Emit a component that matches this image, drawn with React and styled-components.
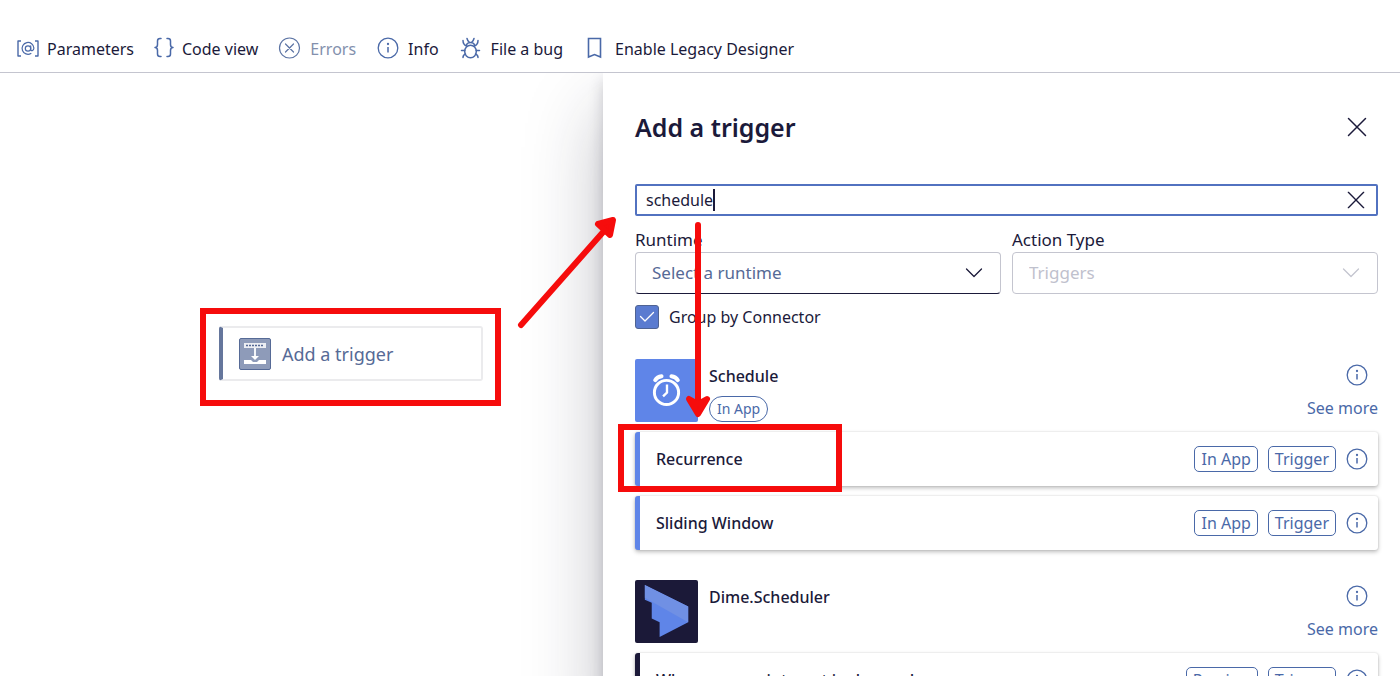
import React, { useState } from "react";
import styled, { createGlobalStyle } from "styled-components";

const ink = "#1b1a3a";
const blue = "#5f85e8";
const steel = "#4a69a8";
const grey = "#c4c5cf";
const red = "#f60c0c";

const GlobalStyle = createGlobalStyle`
  * { box-sizing: border-box; }
  html, body, #root { height: 100%; }
  body {
    margin: 0;
    overflow: hidden;
    background: #fff;
    color: ${ink};
    font: 16px/24px "Segoe UI", "Noto Sans", "Open Sans", sans-serif;
  }
  button, input, select { font: inherit; color: inherit; }
  button { padding: 0; border: 0; background: none; cursor: pointer; }
  svg { display: block; flex: none; }
`;

const Page = styled.div`
  display: flex;
  flex-direction: column;
  height: 100%;
`;

const Toolbar = styled.header`
  display: flex;
  flex: none;
  gap: 20px;
  padding: 37px 15px 11px;
  border-bottom: 1px solid ${grey};
`;

const ToolButton = styled.button`
  display: flex;
  align-items: center;
  gap: 8px;
  white-space: nowrap;
  &:disabled { color: #8390ad; cursor: default; }
`;

const Workspace = styled.main`
  position: relative;
  display: grid;
  flex: 1;
  min-height: 0;
  grid-template-columns: minmax(0, 603fr) minmax(0, 797fr);
  overflow: hidden;
`;

const Canvas = styled.section`
  position: relative;
`;

const TriggerNode = styled.button`
  position: absolute;
  left: 219px;
  top: 253px;
  display: flex;
  align-items: center;
  gap: 11px;
  width: 264px;
  height: 55px;
  padding-left: 16px;
  border: 2px solid #ebebed;
  border-left: 4px solid #65769c;
  border-radius: 3px;
  background: #fff;
  color: #566a96;
  font-size: 18px;
`;

const Highlight = styled.span`
  position: absolute;
  inset: ${(p) => p.$inset};
  width: ${(p) => p.$width || "auto"};
  border: 6px solid ${red};
  pointer-events: none;
`;

const Panel = styled.aside`
  min-width: 0;
  padding: 36px 22px 0 32px;
  background: #fff;
  box-shadow: 0 38px 72px rgba(30, 30, 50, 0.28), 0 8px 14px rgba(30, 30, 50, 0.2);
`;

const PanelHeader = styled.div`
  display: flex;
  align-items: center;
  justify-content: space-between;
  height: 36px;
  padding-right: 11px;
`;

const Title = styled.h1`
  margin: 0;
  font-size: 25px;
  line-height: 36px;
  font-weight: 600;
`;

const SearchBox = styled.div`
  display: flex;
  align-items: center;
  height: 32px;
  margin-top: 39px;
  padding: 0 11px 0 9px;
  border: 2px solid #5272c0;
  border-radius: 2px;
`;

const SearchInput = styled.input`
  field-sizing: content;
  min-width: 8px;
  padding: 0;
  border: 0;
  outline: 0;
  background: none;
  caret-color: transparent;
`;

const Caret = styled.span`
  width: 2px;
  height: 22px;
  background: ${ink};
`;

const ClearButton = styled.button`
  margin-left: auto;
`;

const Filters = styled.div`
  display: grid;
  grid-template-columns: 1fr 1fr;
  gap: 11px;
  margin-top: 12px;
`;

const Field = styled.label`
  display: block;
  font-size: 17px;
`;

const SelectFrame = styled.span`
  display: grid;
  align-items: center;
  > * { grid-area: 1 / 1; }
  > svg { justify-self: end; margin-right: 17px; pointer-events: none; }
`;

const Select = styled.select`
  appearance: none;
  width: 100%;
  height: 42px;
  padding: 0 40px 0 16px;
  border: 1px solid ${grey};
  border-bottom-color: ${ink};
  border-radius: 4px;
  background: #fff;
  color: #566a96;
  &:disabled { border-color: ${grey}; color: #bfc1cd; opacity: 1; }
`;

const CheckLabel = styled.label`
  display: flex;
  align-items: center;
  gap: 10px;
  margin-top: 11px;
`;

const CheckFrame = styled.span`
  display: grid;
  place-items: center;
  > * { grid-area: 1 / 1; }
  > svg { pointer-events: none; }
`;

const Checkbox = styled.input`
  appearance: none;
  width: 24px;
  height: 24px;
  margin: 0;
  border: 1px solid #4f6393;
  border-radius: 3px;
  background: #fff;
  &:checked { background: #5a7bd0; }
  & + svg { visibility: hidden; }
  &:checked + svg { visibility: visible; }
`;

const Group = styled.section`
  display: flex;
  flex-direction: column;
  gap: 10px;
  margin-top: 30px;
`;

const GroupHeader = styled.div`
  display: flex;
  gap: 11px;
  height: 63px;
`;

const Logo = styled.span`
  display: grid;
  place-items: center;
  width: 63px;
  height: 63px;
  border-radius: 2px;
  background: ${(p) => p.$color};
`;

const GroupName = styled.div`
  display: flex;
  flex: 1;
  flex-direction: column;
  align-items: flex-start;
  gap: 8px;
  padding-top: 5px;
`;

const GroupTitle = styled.h2`
  margin: 0;
  font-size: 16px;
  line-height: 24px;
  font-weight: 500;
`;

const Pill = styled.span`
  padding: 0 7px;
  border: 1px solid ${steel};
  border-radius: 14px;
  color: ${steel};
  font-size: 14px;
  line-height: 24px;
`;

const GroupSide = styled.div`
  display: flex;
  flex-direction: column;
  align-items: flex-end;
  gap: 10px;
  padding-top: 5px;
  > button { margin-right: 10px; }
`;

const SeeMore = styled.a`
  color: ${steel};
  text-decoration: none;
`;

const Operation = styled.article`
  position: relative;
  display: flex;
  align-items: center;
  gap: 10px;
  height: 54px;
  padding: 0 10px 0 16px;
  border-left: 5px solid ${(p) => p.$color};
  border-radius: 3px;
  background: #fff;
  box-shadow: 0 0 2px rgba(0, 0, 0, 0.14), 0 2px 4px rgba(0, 0, 0, 0.26);
`;

const OperationName = styled.h3`
  flex: 1;
  margin: 0;
  font-size: 16px;
  line-height: 24px;
  font-weight: 500;
`;

const Tag = styled.span`
  padding: 0 6px;
  border: 1px solid ${steel};
  border-radius: 5px;
  color: ${steel};
  line-height: 24px;
`;

const Arrows = styled.svg`
  position: absolute;
  left: 0;
  top: 0;
  pointer-events: none;
`;

const stroke = { fill: "none", stroke: "currentColor", strokeLinecap: "round", strokeLinejoin: "round" };

const ParametersIcon = () => (
  <svg width="24" height="24" viewBox="-1 0 24 24" {...stroke} stroke={steel} strokeWidth="1.4">
    <path d="M5 4H2v15h3M19 4h3v15h-3" strokeLinecap="butt" />
    <circle cx="12" cy="11.5" r="2.7" strokeWidth="1.2" />
    <path d="M14.7 8.8v3.4c0 2.3 3.2 1.8 3.2-1.1A5.9 5.9 0 1 0 14.9 16.5" strokeWidth="1.2" />
  </svg>
);

const BracesIcon = () => (
  <svg width="20" height="24" viewBox="1 0 20 24" {...stroke} stroke={steel} strokeWidth="1.5">
    <path d="M8 1.500H7Q4.500 1.500 4.500 4v3.500Q4.500 10.500 2 10.500q2.500 0 2.500 3V17Q4.500 19.500 7 19.500h1M14 1.500h1q2.500 0 2.500 2.500v3.500q0 3 2.500 3-2.500 0-2.500 3V17q0 2.500-2.500 2.500h-1" />
  </svg>
);

const ErrorIcon = () => (
  <svg width="24" height="24" viewBox="0 0 24 24" {...stroke} stroke="#5c74a4" strokeWidth="1.2">
    <circle cx="11.5" cy="11" r="10" />
    <path d="m7.500 7 8 8m0-8-8 8" />
  </svg>
);

const InfoIcon = ({ size = 24, viewBox = "-1 0 24 24" }) => (
  <svg width={size} height={size} viewBox={viewBox} {...stroke} stroke={steel} strokeWidth="1.3">
    <circle cx="11" cy="11" r="9.8" />
    <path d="M11 10v5.500" strokeWidth="1.5" strokeLinecap="butt" />
    <circle cx="11" cy="7" r="0.5" />
  </svg>
);

const BugIcon = () => (
  <svg width="24" height="24" viewBox="0 0 24 24" {...stroke} stroke={steel} strokeWidth="1.5">
    <ellipse cx="11.5" cy="14.500" rx="5.8" ry="6.300" />
    <path d="M7.500 8.500C8 4.500 15 4.500 15.500 8.500M8 1.500q.5 2 2 3.500M15 1.500q-.5 2-2 3.500M4 3.500q0 4 3.500 5.500M19 3.500q0 4-3.500 5.500M2.500 13.500h3.200M17.300 13.500h3.200M4 20.500q0-2.500 2.500-3.500M19 20.500q0-2.500-2.500-3.500" />
  </svg>
);

const BookmarkIcon = () => (
  <svg width="24" height="24" viewBox="0 0 24 24" {...stroke} stroke={steel} strokeWidth="1.6">
    <path d="M5.500 1.500h12v18.500l-6-2.500-6 2.500z" strokeLinejoin="miter" />
  </svg>
);

const CloseIcon = ({ size }) => (
  <svg width={size} height={size} viewBox="0 0 20 20" {...stroke} stroke={ink} strokeWidth="1.5">
    <path d="m1.500 1.500 17 17m0-17-17 17" />
  </svg>
);

const ChevronIcon = ({ color }) => (
  <svg width="20" height="20" viewBox="0 0 20 20" {...stroke} stroke={color} strokeWidth="1.3">
    <path d="m2.500 6 7.500 7.500L17.500 6" />
  </svg>
);

const CheckIcon = () => (
  <svg width="24" height="24" viewBox="0 0 24 24" {...stroke} stroke="#fff" strokeWidth="1.3">
    <path d="m5.500 11.500 4.500 4.500 8.500-8.500" />
  </svg>
);

const TriggerIcon = () => (
  <svg width="32" height="32" viewBox="0 0 32 32">
    <rect x="0.5" y="0.5" width="31" height="31" rx="1.5" fill="#8e9bb9" stroke="#566a96" />
    <rect x="5" y="5" width="22" height="5" fill="#eceef3" />
    <path d="M7 7.500h18" stroke="#566a96" strokeWidth="1.5" strokeDasharray="2 1" />
    <path d="M16 10v10" stroke="#fff" strokeWidth="1.8" />
    <path d="m12 18 4 4 4-4z" fill="#fff" />
    <path d="M5 22h7l2 2h4l2-2h7v4H5z" fill="#fff" />
  </svg>
);

const ClockIcon = () => (
  <svg width="63" height="63" viewBox="0 0 64 64" {...stroke} stroke="#fff">
    <circle cx="32" cy="34" r="12.3" strokeWidth="3" />
    <path d="M32.500 26v8l-4 4" strokeWidth="2.4" strokeLinecap="butt" strokeLinejoin="miter" />
    <path d="M20.500 21.500q2-3.500 6.500-4M43.500 21.500q-2-3.500-6.500-4" strokeWidth="4" />
  </svg>
);

const DimeIcon = () => (
  <svg width="63" height="63" viewBox="0 0 64 64">
    <path d="M10 5 54 27v16L25 58V43l-8-4V23l-7-3z" fill={blue} />
    <path d="M10 5 54 27v16L10 18z" fill="#7090e4" />
  </svg>
);

const tools = [
  { label: "Parameters", Icon: ParametersIcon },
  { label: "Code view", Icon: BracesIcon },
  { label: "Errors", Icon: ErrorIcon, disabled: true },
  { label: "Info", Icon: InfoIcon },
  { label: "File a bug", Icon: BugIcon },
  { label: "Enable Legacy Designer", Icon: BookmarkIcon },
];

const groups = [
  {
    name: "Schedule",
    Icon: ClockIcon,
    logoColor: blue,
    color: blue,
    pill: "In App",
    operations: [
      { name: "Recurrence", tags: ["In App", "Trigger"], highlighted: true },
      { name: "Sliding Window", tags: ["In App", "Trigger"] },
    ],
  },
  {
    name: "Dime.Scheduler",
    Icon: DimeIcon,
    logoColor: "#1b1938",
    color: "#1b1938",
    operations: [{ name: "When an appointment is changed", tags: ["Preview", "Trigger"] }],
  },
];

const InfoButton = ({ name }) => (
  <button type="button" aria-label={`About ${name}`}>
    <InfoIcon size={22} viewBox="0 0 22 22" />
  </button>
);

const ConnectorGroup = ({ group }) => (
  <Group>
    <GroupHeader>
      <Logo $color={group.logoColor}><group.Icon /></Logo>
      <GroupName>
        <GroupTitle>{group.name}</GroupTitle>
        {group.pill && <Pill>{group.pill}</Pill>}
      </GroupName>
      <GroupSide>
        <InfoButton name={group.name} />
        <SeeMore href="#more">See more</SeeMore>
      </GroupSide>
    </GroupHeader>
    {group.operations.map((op) => (
      <Operation key={op.name} $color={group.color}>
        <OperationName>{op.name}</OperationName>
        {op.tags.map((tag) => <Tag key={tag}>{tag}</Tag>)}
        <InfoButton name={op.name} />
        {op.highlighted && <Highlight $inset="-8px auto -6px -22px" $width="224px" />}
      </Operation>
    ))}
  </Group>
);

export default function App() {
  const [query, setQuery] = useState("schedule");
  const [grouped, setGrouped] = useState(true);

  return (
    <Page>
      <GlobalStyle />
      <Toolbar>
        {tools.map(({ label, Icon, disabled }) => (
          <ToolButton key={label} type="button" disabled={disabled}>
            <Icon />
            {label}
          </ToolButton>
        ))}
      </Toolbar>
      <Workspace>
        <Canvas>
          <TriggerNode type="button">
            <TriggerIcon />
            Add a trigger
            <Highlight $inset="-20px -20px -27px -23px" />
          </TriggerNode>
        </Canvas>
        <Panel>
          <PanelHeader>
            <Title>Add a trigger</Title>
            <button type="button" aria-label="Close"><CloseIcon size={20} /></button>
          </PanelHeader>
          <SearchBox>
            <SearchInput aria-label="Search" value={query} onChange={(e) => setQuery(e.target.value)} />
            <Caret />
            <ClearButton type="button" aria-label="Clear"><CloseIcon size={18} /></ClearButton>
          </SearchBox>
          <Filters>
            <Field>
              Runtime
              <SelectFrame>
                <Select defaultValue="">
                  <option value="">Select a runtime</option>
                </Select>
                <ChevronIcon color={ink} />
              </SelectFrame>
            </Field>
            <Field>
              Action Type
              <SelectFrame>
                <Select disabled defaultValue="Triggers">
                  <option>Triggers</option>
                </Select>
                <ChevronIcon color={grey} />
              </SelectFrame>
            </Field>
          </Filters>
          <CheckLabel>
            <CheckFrame>
              <Checkbox type="checkbox" checked={grouped} onChange={(e) => setGrouped(e.target.checked)} />
              <CheckIcon />
            </CheckFrame>
            Group by Connector
          </CheckLabel>
          {groups.map((group) => <ConnectorGroup key={group.name} group={group} />)}
        </Panel>
        <Arrows width="720" height="360" viewBox="0 0 720 360" aria-hidden="true" {...stroke} stroke={red} strokeWidth="6">
          <path d="M521 252 612 149" />
          <path d="m598 151 15-4-3 15z" fill={red} />
          <path d="M698 152v185" />
          <path d="m689 326 9 15 9-15-9 5z" fill={red} />
        </Arrows>
      </Workspace>
    </Page>
  );
}
